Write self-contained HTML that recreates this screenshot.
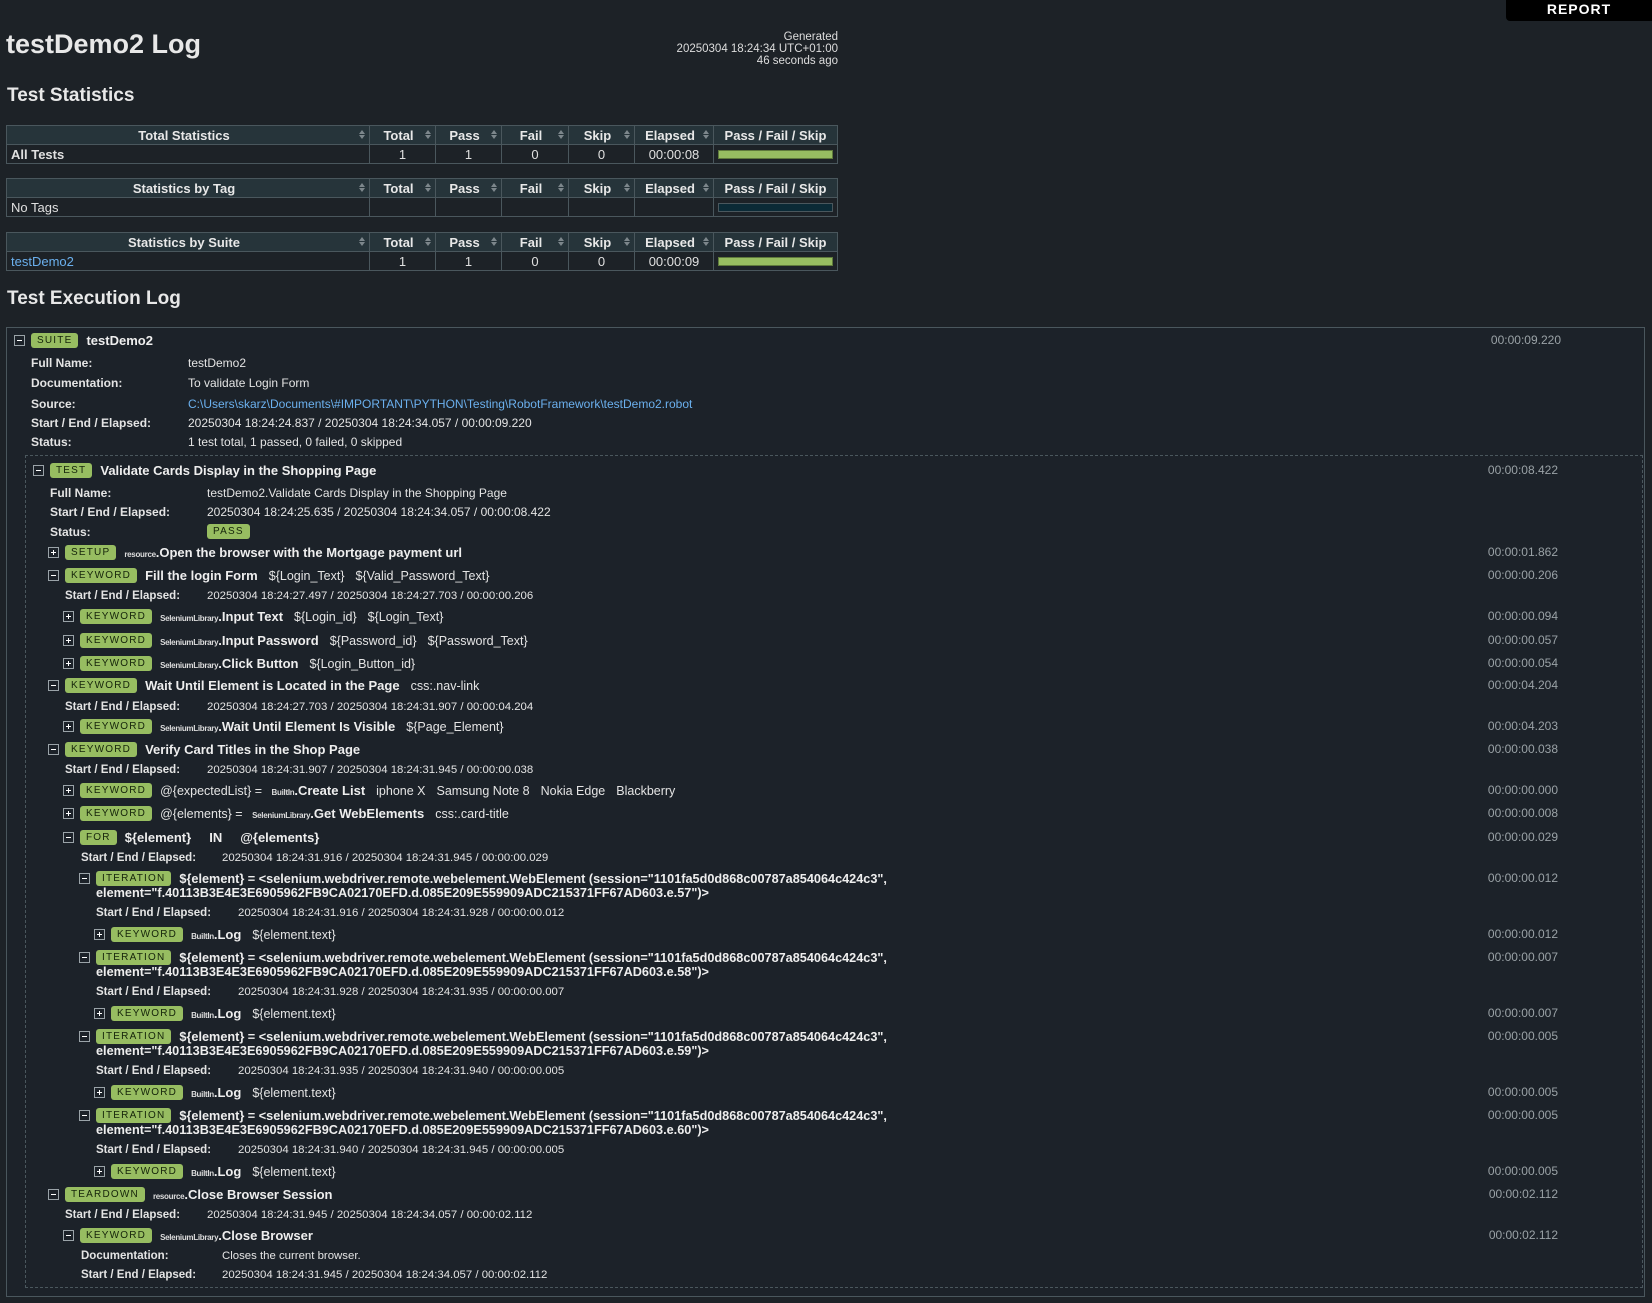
<!DOCTYPE html>
<html><head><meta charset="utf-8"><style>
body{margin:0;background:#1d2227;width:1652px;height:1303px;overflow:hidden;position:relative;font-family:"Liberation Sans",Arial,sans-serif;color:#e6e6e6}
h1{position:absolute;left:6px;top:29px;margin:0;font-size:27px;font-weight:bold;color:#e8e8e8}
h2{position:absolute;left:7px;margin:0;font-size:19px;font-weight:bold;color:#e8e8e8}
#gen{position:absolute;right:814px;top:31px;text-align:right;font-size:11.5px;line-height:12px;color:#ddd}
#rep{position:absolute;left:1506px;top:0;width:146px;height:21px;background:#000;border-bottom-left-radius:4px;color:#fff;font-weight:bold;font-size:14px;text-align:center;line-height:18px;letter-spacing:1px}
table{position:absolute;left:6px;width:832px;border-collapse:collapse;font-size:13px;table-layout:fixed}
th,td{border:1px solid #4a575d;padding:0 4px;height:18px;line-height:17px}
th{background:#26343a;color:#e8e8e8;font-weight:bold;position:relative;padding-right:12px}
th .s{position:absolute;right:4px;top:4px;width:6px;height:10px}
th .s:before{content:"";position:absolute;left:0;top:0;border-left:3px solid transparent;border-right:3px solid transparent;border-bottom:4px solid #7d878c}
th .s:after{content:"";position:absolute;left:0;top:5px;border-left:3px solid transparent;border-right:3px solid transparent;border-top:4px solid #7d878c}
td{text-align:center;color:#e0e0e0}
td.n{text-align:left;font-weight:bold}
.bar{height:7px;background:#97bd61;border:1px solid #5f7a3c}
.bar.e{background:#0b2a36;border-color:#4a575d}
#suite{position:absolute;left:6px;top:327px;width:1637px;height:968px;border:1px solid #4a575d;background:#1c2229}
#test{position:absolute;left:25px;top:455px;width:1616px;height:831px;border:1px dashed #4a575d}
.r{position:absolute;white-space:nowrap;height:16px;line-height:16px;font-size:12.5px;color:#e4e4e4}
.t{display:inline-block;width:9px;height:9px;border:1px solid #9aa3a8;vertical-align:middle;position:relative;margin-right:6px;top:-1px}
.t:before{content:"";position:absolute;left:2px;top:4px;width:5px;height:1px;background:#fff}
.t.p:after{content:"";position:absolute;left:4px;top:2px;width:1px;height:5px;background:#fff}
.b{display:inline-block;background:#97bd61;color:#15240a;font-size:10px;letter-spacing:1.2px;padding:0 6px;height:15px;line-height:15px;border-radius:3px;vertical-align:middle;margin-right:8px;position:relative;top:-1px;font-weight:normal}
.k{font-weight:bold;font-size:13px;color:#eee}
.lib{font-size:8px;font-weight:bold;letter-spacing:-0.3px;color:#ddd}
.lb{font-weight:bold;font-size:12px;position:absolute}
.v{position:absolute;font-size:12px}
.v2{font-size:11.4px!important}
.tm{position:absolute;font-size:12px;color:#9aa2a6;white-space:nowrap}
a{color:#6bb0ee;text-decoration:none}
.ar{margin-left:11px}
.it{font-weight:bold;font-size:12.7px;color:#eee}
</style></head><body>
<div id="rep">REPORT</div>
<h1>testDemo2 Log</h1>
<div id="gen">Generated<br>20250304 18:24:34 UTC+01:00<br>46 seconds ago</div>
<h2 style="top:85px">Test Statistics</h2>
<table style="top:125px"><colgroup><col style="width:363px"><col style="width:66px"><col style="width:66px"><col style="width:67px"><col style="width:66px"><col style="width:79px"><col></colgroup>
<tr><th>Total Statistics<span class="s"></span></th><th>Total<span class="s"></span></th><th>Pass<span class="s"></span></th><th>Fail<span class="s"></span></th><th>Skip<span class="s"></span></th><th>Elapsed<span class="s"></span></th><th style="padding-right:4px">Pass / Fail / Skip</th></tr>
<tr><td class="n">All Tests</td><td>1</td><td>1</td><td>0</td><td>0</td><td>00:00:08</td><td><div class="bar"></div></td></tr></table>
<table style="top:178px"><colgroup><col style="width:363px"><col style="width:66px"><col style="width:66px"><col style="width:67px"><col style="width:66px"><col style="width:79px"><col></colgroup>
<tr><th>Statistics by Tag<span class="s"></span></th><th>Total<span class="s"></span></th><th>Pass<span class="s"></span></th><th>Fail<span class="s"></span></th><th>Skip<span class="s"></span></th><th>Elapsed<span class="s"></span></th><th style="padding-right:4px">Pass / Fail / Skip</th></tr>
<tr><td class="n" style="font-weight:normal">No Tags</td><td></td><td></td><td></td><td></td><td></td><td><div class="bar e"></div></td></tr></table>
<table style="top:232px"><colgroup><col style="width:363px"><col style="width:66px"><col style="width:66px"><col style="width:67px"><col style="width:66px"><col style="width:79px"><col></colgroup>
<tr><th>Statistics by Suite<span class="s"></span></th><th>Total<span class="s"></span></th><th>Pass<span class="s"></span></th><th>Fail<span class="s"></span></th><th>Skip<span class="s"></span></th><th>Elapsed<span class="s"></span></th><th style="padding-right:4px">Pass / Fail / Skip</th></tr>
<tr><td class="n" style="font-weight:normal"><a>testDemo2</a></td><td>1</td><td>1</td><td>0</td><td>0</td><td>00:00:09</td><td><div class="bar"></div></td></tr></table>
<h2 style="top:288px">Test Execution Log</h2>
<div id="suite"></div><div id="test"></div>

<div class="r" style="left:14px;top:333px"><span class="t"></span><span class="b">SUITE</span><span class="k">testDemo2</span></div><div class="tm" style="right:91px;top:333px">00:00:09.220</div>
<div class="r" style="top:355px"><span class="lb" style="left:31px">Full Name:</span><span class="v" style="left:188px">testDemo2</span></div>
<div class="r" style="top:375px"><span class="lb" style="left:31px">Documentation:</span><span class="v" style="left:188px">To validate Login Form</span></div>
<div class="r" style="top:396px"><span class="lb" style="left:31px">Source:</span><span class="v" style="left:188px"><a>C:\Users\skarz\Documents\#IMPORTANT\PYTHON\Testing\RobotFramework\testDemo2.robot</a></span></div>
<div class="r" style="top:415px"><span class="lb" style="left:31px">Start / End / Elapsed:</span><span class="v" style="left:188px">20250304 18:24:24.837 / 20250304 18:24:34.057 / 00:00:09.220</span></div>
<div class="r" style="top:434px"><span class="lb" style="left:31px">Status:</span><span class="v" style="left:188px">1 test total, 1 passed, 0 failed, 0 skipped</span></div>

<div class="r" style="left:33px;top:463px"><span class="t"></span><span class="b">TEST</span><span class="k">Validate Cards Display in the Shopping Page</span></div><div class="tm" style="right:94px;top:463px">00:00:08.422</div>
<div class="r" style="top:485px"><span class="lb" style="left:50px">Full Name:</span><span class="v" style="left:207px">testDemo2.Validate Cards Display in the Shopping Page</span></div>
<div class="r" style="top:504px"><span class="lb" style="left:50px">Start / End / Elapsed:</span><span class="v" style="left:207px">20250304 18:24:25.635 / 20250304 18:24:34.057 / 00:00:08.422</span></div>
<div class="r" style="top:524px"><span class="lb" style="left:50px">Status:</span><span class="v" style="left:207px"><span class="b">PASS</span></span></div>

<div class="r" style="left:48px;top:545px"><span class="t p"></span><span class="b">SETUP</span><span class="lib">resource</span><span class="k">.Open the browser with the Mortgage payment url</span></div><div class="tm" style="right:94px;top:545px">00:00:01.862</div>
<div class="r" style="left:48px;top:568px"><span class="t"></span><span class="b">KEYWORD</span><span class="k">Fill the login Form</span><span class="ar">${Login_Text}</span><span class="ar">${Valid_Password_Text}</span></div><div class="tm" style="right:94px;top:568px">00:00:00.206</div>
<div class="r" style="top:588px"><span class="lb" style="left:65px;font-size:11.5px">Start / End / Elapsed:</span><span class="v v2" style="left:207px">20250304 18:24:27.497 / 20250304 18:24:27.703 / 00:00:00.206</span></div>
<div class="r" style="left:63px;top:609px"><span class="t p"></span><span class="b">KEYWORD</span><span class="lib">SeleniumLibrary</span><span class="k">.Input Text</span><span class="ar">${Login_id}</span><span class="ar">${Login_Text}</span></div><div class="tm" style="right:94px;top:609px">00:00:00.094</div>
<div class="r" style="left:63px;top:633px"><span class="t p"></span><span class="b">KEYWORD</span><span class="lib">SeleniumLibrary</span><span class="k">.Input Password</span><span class="ar">${Password_id}</span><span class="ar">${Password_Text}</span></div><div class="tm" style="right:94px;top:633px">00:00:00.057</div>
<div class="r" style="left:63px;top:656px"><span class="t p"></span><span class="b">KEYWORD</span><span class="lib">SeleniumLibrary</span><span class="k">.Click Button</span><span class="ar">${Login_Button_id}</span></div><div class="tm" style="right:94px;top:656px">00:00:00.054</div>
<div class="r" style="left:48px;top:678px"><span class="t"></span><span class="b">KEYWORD</span><span class="k">Wait Until Element is Located in the Page</span><span class="ar">css:.nav-link</span></div><div class="tm" style="right:94px;top:678px">00:00:04.204</div>
<div class="r" style="top:699px"><span class="lb" style="left:65px;font-size:11.5px">Start / End / Elapsed:</span><span class="v v2" style="left:207px">20250304 18:24:27.703 / 20250304 18:24:31.907 / 00:00:04.204</span></div>
<div class="r" style="left:63px;top:719px"><span class="t p"></span><span class="b">KEYWORD</span><span class="lib">SeleniumLibrary</span><span class="k">.Wait Until Element Is Visible</span><span class="ar">${Page_Element}</span></div><div class="tm" style="right:94px;top:719px">00:00:04.203</div>
<div class="r" style="left:48px;top:742px"><span class="t"></span><span class="b">KEYWORD</span><span class="k">Verify Card Titles in the Shop Page</span></div><div class="tm" style="right:94px;top:742px">00:00:00.038</div>
<div class="r" style="top:762px"><span class="lb" style="left:65px;font-size:11.5px">Start / End / Elapsed:</span><span class="v v2" style="left:207px">20250304 18:24:31.907 / 20250304 18:24:31.945 / 00:00:00.038</span></div>
<div class="r" style="left:63px;top:783px"><span class="t p"></span><span class="b">KEYWORD</span>@{expectedList} = <span class="lib" style="margin-left:6px">BuiltIn</span><span class="k">.Create List</span><span class="ar">iphone X</span><span class="ar">Samsung Note 8</span><span class="ar">Nokia Edge</span><span class="ar">Blackberry</span></div><div class="tm" style="right:94px;top:783px">00:00:00.000</div>
<div class="r" style="left:63px;top:806px"><span class="t p"></span><span class="b">KEYWORD</span>@{elements} = <span class="lib" style="margin-left:6px">SeleniumLibrary</span><span class="k">.Get WebElements</span><span class="ar">css:.card-title</span></div><div class="tm" style="right:94px;top:806px">00:00:00.008</div>
<div class="r" style="left:63px;top:830px"><span class="t"></span><span class="b">FOR</span><span class="k">${element}</span><span class="k" style="margin-left:18px">IN</span><span class="k" style="margin-left:18px">@{elements}</span></div><div class="tm" style="right:94px;top:830px">00:00:00.029</div>
<div class="r" style="top:850px"><span class="lb" style="left:81px;font-size:11.5px">Start / End / Elapsed:</span><span class="v v2" style="left:222px">20250304 18:24:31.916 / 20250304 18:24:31.945 / 00:00:00.029</span></div>

<div class="r" style="left:79px;top:871px"><span class="t"></span><span class="b">ITERATION</span><span class="it">${element} = &lt;selenium.webdriver.remote.webelement.WebElement (session="1101fa5d0d868c00787a854064c424c3",</span></div><div class="r it" style="left:96px;top:885px">element="f.40113B3E4E3E6905962FB9CA02170EFD.d.085E209E559909ADC215371FF67AD603.e.57")&gt;</div><div class="tm" style="right:94px;top:871px">00:00:00.012</div>
<div class="r" style="top:905px"><span class="lb" style="left:96px;font-size:11.5px">Start / End / Elapsed:</span><span class="v v2" style="left:238px">20250304 18:24:31.916 / 20250304 18:24:31.928 / 00:00:00.012</span></div>
<div class="r" style="left:94px;top:927px"><span class="t p"></span><span class="b">KEYWORD</span><span class="lib">BuiltIn</span><span class="k">.Log</span><span class="ar">${element.text}</span></div><div class="tm" style="right:94px;top:927px">00:00:00.012</div>

<div class="r" style="left:79px;top:950px"><span class="t"></span><span class="b">ITERATION</span><span class="it">${element} = &lt;selenium.webdriver.remote.webelement.WebElement (session="1101fa5d0d868c00787a854064c424c3",</span></div><div class="r it" style="left:96px;top:964px">element="f.40113B3E4E3E6905962FB9CA02170EFD.d.085E209E559909ADC215371FF67AD603.e.58")&gt;</div><div class="tm" style="right:94px;top:950px">00:00:00.007</div>
<div class="r" style="top:984px"><span class="lb" style="left:96px;font-size:11.5px">Start / End / Elapsed:</span><span class="v v2" style="left:238px">20250304 18:24:31.928 / 20250304 18:24:31.935 / 00:00:00.007</span></div>
<div class="r" style="left:94px;top:1006px"><span class="t p"></span><span class="b">KEYWORD</span><span class="lib">BuiltIn</span><span class="k">.Log</span><span class="ar">${element.text}</span></div><div class="tm" style="right:94px;top:1006px">00:00:00.007</div>

<div class="r" style="left:79px;top:1029px"><span class="t"></span><span class="b">ITERATION</span><span class="it">${element} = &lt;selenium.webdriver.remote.webelement.WebElement (session="1101fa5d0d868c00787a854064c424c3",</span></div><div class="r it" style="left:96px;top:1043px">element="f.40113B3E4E3E6905962FB9CA02170EFD.d.085E209E559909ADC215371FF67AD603.e.59")&gt;</div><div class="tm" style="right:94px;top:1029px">00:00:00.005</div>
<div class="r" style="top:1063px"><span class="lb" style="left:96px;font-size:11.5px">Start / End / Elapsed:</span><span class="v v2" style="left:238px">20250304 18:24:31.935 / 20250304 18:24:31.940 / 00:00:00.005</span></div>
<div class="r" style="left:94px;top:1085px"><span class="t p"></span><span class="b">KEYWORD</span><span class="lib">BuiltIn</span><span class="k">.Log</span><span class="ar">${element.text}</span></div><div class="tm" style="right:94px;top:1085px">00:00:00.005</div>

<div class="r" style="left:79px;top:1108px"><span class="t"></span><span class="b">ITERATION</span><span class="it">${element} = &lt;selenium.webdriver.remote.webelement.WebElement (session="1101fa5d0d868c00787a854064c424c3",</span></div><div class="r it" style="left:96px;top:1122px">element="f.40113B3E4E3E6905962FB9CA02170EFD.d.085E209E559909ADC215371FF67AD603.e.60")&gt;</div><div class="tm" style="right:94px;top:1108px">00:00:00.005</div>
<div class="r" style="top:1142px"><span class="lb" style="left:96px;font-size:11.5px">Start / End / Elapsed:</span><span class="v v2" style="left:238px">20250304 18:24:31.940 / 20250304 18:24:31.945 / 00:00:00.005</span></div>
<div class="r" style="left:94px;top:1164px"><span class="t p"></span><span class="b">KEYWORD</span><span class="lib">BuiltIn</span><span class="k">.Log</span><span class="ar">${element.text}</span></div><div class="tm" style="right:94px;top:1164px">00:00:00.005</div>

<div class="r" style="left:48px;top:1187px"><span class="t"></span><span class="b">TEARDOWN</span><span class="lib">resource</span><span class="k">.Close Browser Session</span></div><div class="tm" style="right:94px;top:1187px">00:00:02.112</div>
<div class="r" style="top:1207px"><span class="lb" style="left:65px;font-size:11.5px">Start / End / Elapsed:</span><span class="v v2" style="left:207px">20250304 18:24:31.945 / 20250304 18:24:34.057 / 00:00:02.112</span></div>
<div class="r" style="left:63px;top:1228px"><span class="t"></span><span class="b">KEYWORD</span><span class="lib">SeleniumLibrary</span><span class="k">.Close Browser</span></div><div class="tm" style="right:94px;top:1228px">00:00:02.112</div>
<div class="r" style="top:1248px"><span class="lb" style="left:81px;font-size:11.5px">Documentation:</span><span class="v v2" style="left:222px">Closes the current browser.</span></div>
<div class="r" style="top:1267px"><span class="lb" style="left:81px;font-size:11.5px">Start / End / Elapsed:</span><span class="v v2" style="left:222px">20250304 18:24:31.945 / 20250304 18:24:34.057 / 00:00:02.112</span></div>
</body></html>
